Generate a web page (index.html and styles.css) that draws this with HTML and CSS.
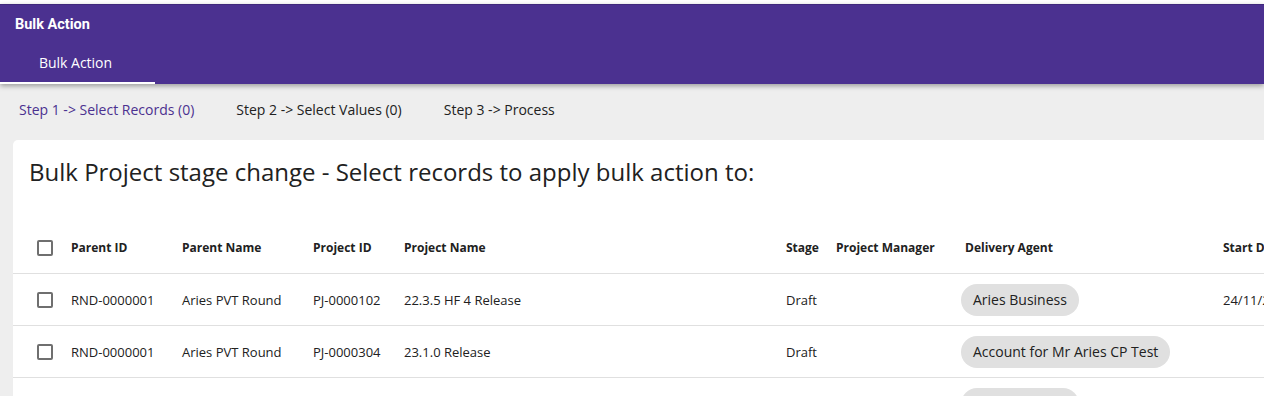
FILE: index.html
```html
<!DOCTYPE html>
<html lang="en">
<head>
<meta charset="utf-8">
<title>Bulk Action</title>
<link rel="stylesheet" href="styles.css">
</head>
<body>
<div class="page">
  <header class="appbar">
    <div class="appbar-title">Bulk Action</div>
    <nav class="tabs">
      <div class="tab tab-active">Bulk Action</div>
    </nav>
  </header>

  <div class="steps">
    <span class="step step-active">Step 1 -&gt; Select Records (0)</span>
    <span class="step">Step 2 -&gt; Select Values (0)</span>
    <span class="step">Step 3 -&gt; Process</span>
  </div>

  <main class="card">
    <h1 class="card-title">Bulk Project stage change - Select records to apply bulk action to:</h1>
    <div class="table">
      <div class="row head">
        <div class="cell"><span class="cb"></span></div>
        <div class="cell">Parent ID</div>
        <div class="cell">Parent Name</div>
        <div class="cell">Project ID</div>
        <div class="cell">Project Name</div>
        <div class="cell">Stage</div>
        <div class="cell">Project Manager</div>
        <div class="cell agent-head">Delivery Agent</div>
        <div class="cell">Start Date</div>
      </div>
      <div class="row">
        <div class="cell"><span class="cb"></span></div>
        <div class="cell">RND-0000001</div>
        <div class="cell">Aries PVT Round</div>
        <div class="cell">PJ-0000102</div>
        <div class="cell">22.3.5 HF 4 Release</div>
        <div class="cell">Draft</div>
        <div class="cell"></div>
        <div class="cell"><span class="pill">Aries Business</span></div>
        <div class="cell">24/11/2022</div>
      </div>
      <div class="row">
        <div class="cell"><span class="cb"></span></div>
        <div class="cell">RND-0000001</div>
        <div class="cell">Aries PVT Round</div>
        <div class="cell">PJ-0000304</div>
        <div class="cell">23.1.0 Release</div>
        <div class="cell">Draft</div>
        <div class="cell"></div>
        <div class="cell"><span class="pill">Account for Mr Aries CP Test</span></div>
        <div class="cell"></div>
      </div>
      <div class="row">
        <div class="cell"><span class="cb"></span></div>
        <div class="cell">RND-0000001</div>
        <div class="cell">Aries PVT Round</div>
        <div class="cell">PJ-0000305</div>
        <div class="cell">23.1.1 Release</div>
        <div class="cell">Draft</div>
        <div class="cell"></div>
        <div class="cell"><span class="pill">Aries Business</span></div>
        <div class="cell"></div>
      </div>
    </div>
  </main>
</div>
</body>
</html>
```

FILE: styles.css
```css
html, body {
  margin: 0;
  padding: 0;
}
body {
  background: #eeeeee;
  font-family: "Open Sans", "Noto Sans", sans-serif;
  color: #212121;
  overflow: hidden;
}
.page {
  padding-top: 4px;
  background: linear-gradient(#ffffff 0 4px, #eeeeee 4px);
  min-height: 392px;
}
.appbar {
  background: #4b3190;
  border-top: 1px solid #40297c;
  height: 79px;
  box-shadow: 0 2px 5px rgba(0, 0, 0, 0.35);
  position: relative;
  z-index: 1;
  display: flex;
  flex-direction: column;
}
.appbar-title {
  font-family: Roboto, "Liberation Sans", sans-serif;
  font-weight: 700;
  font-size: 14.5px;
  color: #ffffff;
  height: 39px;
  line-height: 39px;
  padding-left: 15px;
}
.tabs {
  display: flex;
  height: 40px;
}
.tab {
  width: 155px;
  box-sizing: border-box;
  text-align: center;
  color: #ffffff;
  font-size: 14px;
  line-height: 38px;
  padding-right: 4px;
}
.tab-active {
  border-bottom: 2px solid #ffffff;
}
.steps {
  display: flex;
  gap: 42px;
  padding: 16px 0 20px 19px;
  font-size: 14px;
  line-height: 20px;
  color: #212121;
}
.step-active {
  color: #4b3190;
}
.card {
  margin-left: 13px;
  width: 1300px;
  background: #ffffff;
  border-radius: 5px;
  padding-top: 16px;
  min-height: 300px;
}
.card-title {
  margin: 0 0 34px 16px;
  font-weight: 400;
  font-size: 24px;
  line-height: 32px;
  color: #212121;
}
.table {
  display: flex;
  flex-direction: column;
}
.row {
  display: grid;
  grid-template-columns: 58px 111px 131px 91px 382px 50px 125px 262px 200px;
  height: 52px;
  box-sizing: border-box;
  align-items: center;
  border-bottom: 1px solid #e0e0e0;
  font-size: 13px;
}
.row.head {
  font-weight: 700;
  font-size: 12px;
}
.cell {
  white-space: nowrap;
}
.cell:first-child {
  padding-left: 24px;
  display: flex;
  align-items: center;
}
.agent-head {
  padding-left: 4px;
}
.cb {
  width: 12px;
  height: 12px;
  border: 2px solid #6f6f6f;
  border-radius: 2px;
  display: inline-block;
}
.pill {
  display: inline-block;
  background: #e0e0e0;
  border-radius: 16px;
  height: 32px;
  line-height: 32px;
  padding: 0 12px;
  font-size: 14px;
}
```
